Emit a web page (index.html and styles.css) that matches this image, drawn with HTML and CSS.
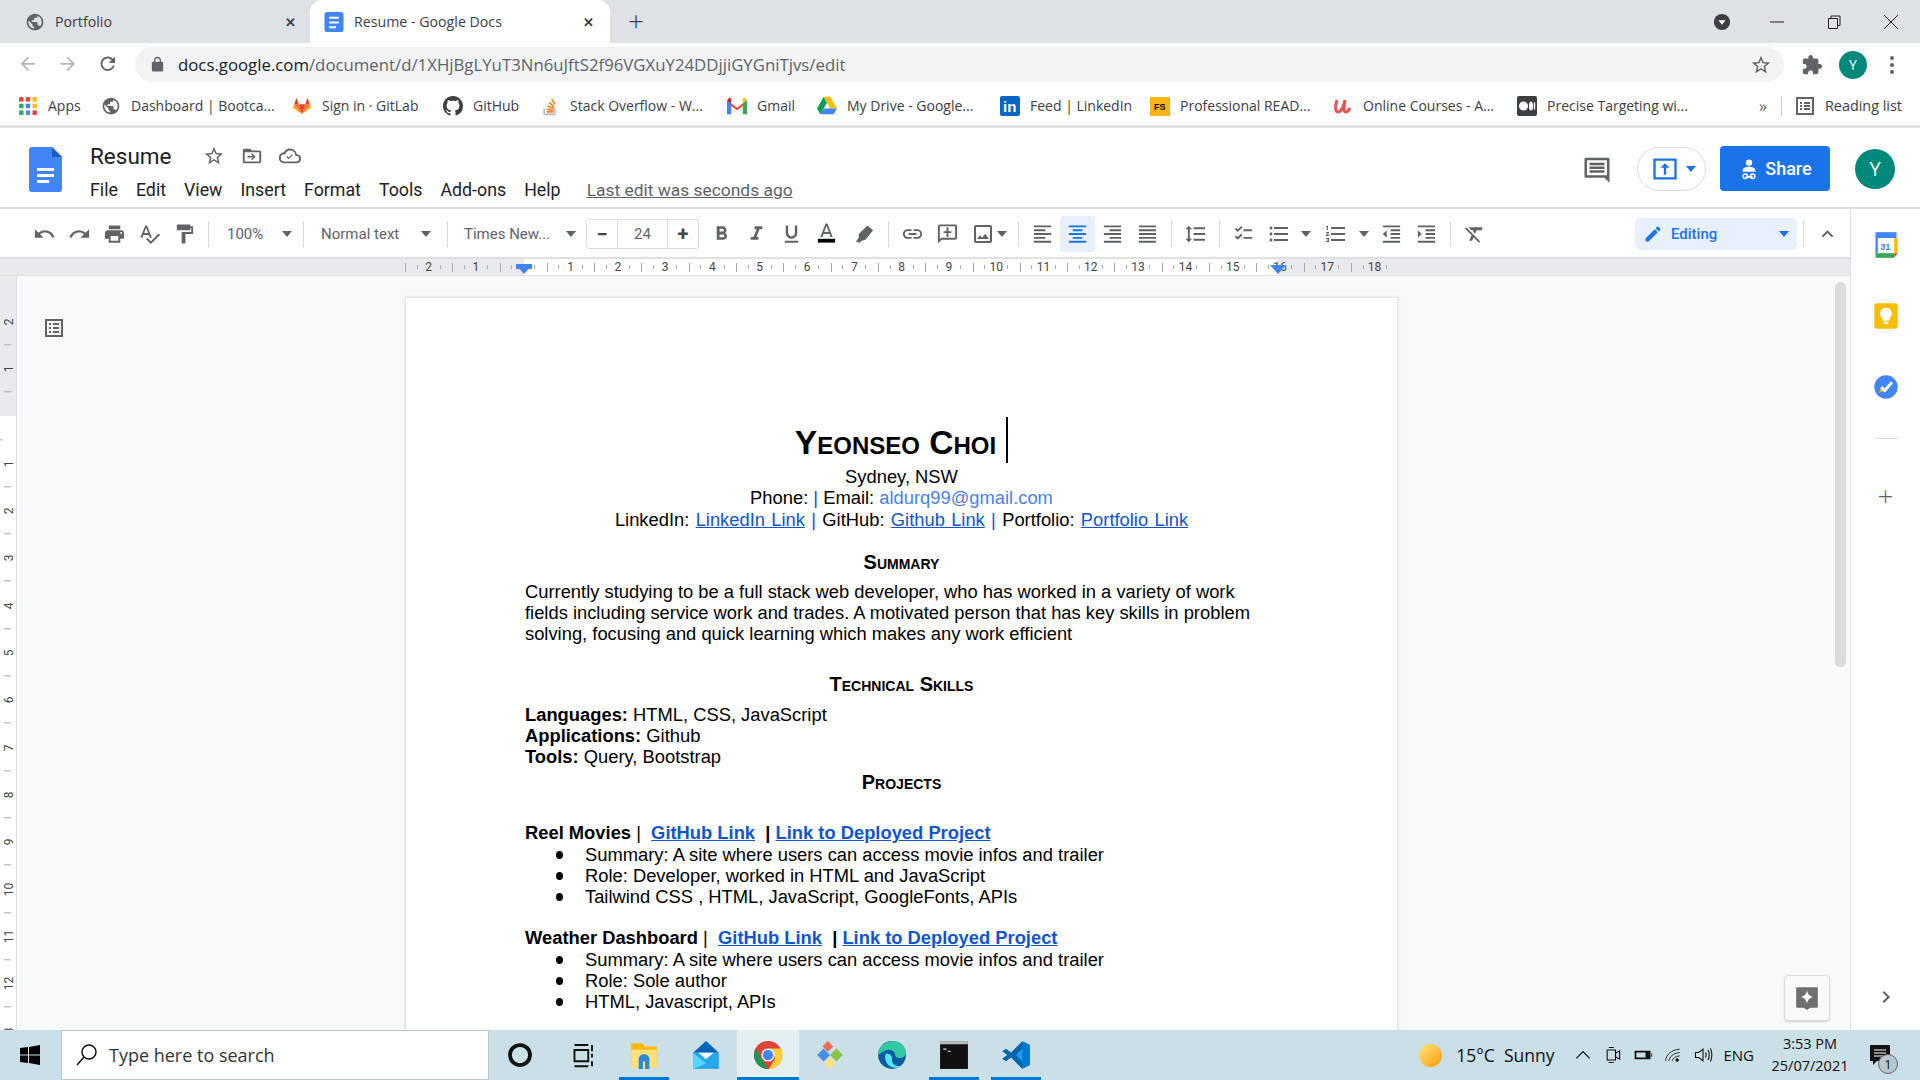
FILE: index.html
```html
<!DOCTYPE html>
<html lang="en">
<head>
    <meta charset="UTF-8">
    <title>Resume - Google Docs</title>
    <link rel="stylesheet" href="styles.css">
</head>
<body>
<svg class="defs" width="0" height="0">
    <symbol id="i-undo" viewBox="0 0 24 24"><path d="M12.5 8c-2.65 0-5.05.99-6.9 2.6L2 7v9h9l-3.62-3.62c1.39-1.16 3.16-1.88 5.12-1.88 3.54 0 6.55 2.31 7.6 5.5l2.37-.78C21.08 11.03 17.15 8 12.5 8z"/></symbol>
    <symbol id="i-redo" viewBox="0 0 24 24"><path d="M18.4 10.6C16.55 8.99 14.15 8 11.5 8c-4.65 0-8.58 3.03-9.96 7.22L3.9 16c1.05-3.19 4.05-5.5 7.6-5.5 1.95 0 3.73.72 5.12 1.88L13 16h9V7l-3.6 3.6z"/></symbol>
    <symbol id="i-print" viewBox="0 0 24 24"><path d="M19 8H5c-1.66 0-3 1.34-3 3v6h4v4h12v-4h4v-6c0-1.66-1.34-3-3-3zm-3 11H8v-5h8v5zm3-7c-.55 0-1-.45-1-1s.45-1 1-1 1 .45 1 1-.45 1-1 1zm-1-9H6v4h12V3z"/></symbol>
    <symbol id="i-spell" viewBox="0 0 24 24"><path d="M12.45 16h2.09L9.43 3H7.57L2.46 16h2.09l1.12-3h5.64l1.14 3zm-6.02-5L8.5 5.48 10.57 11H6.43zm15.16.59l-8.09 8.09L9.83 16l-1.41 1.41 5.09 5.09L23 13l-1.41-1.41z"/></symbol>
    <symbol id="i-paint" viewBox="0 0 24 24"><path d="M18 4V3c0-.55-.45-1-1-1H5c-.55 0-1 .45-1 1v4c0 .55.45 1 1 1h12c.55 0 1-.45 1-1V6h1v4H9v11c0 .55.45 1 1 1h2c.55 0 1-.45 1-1v-9h8V4h-3z"/></symbol>
    <symbol id="i-bold" viewBox="0 0 24 24"><path d="M15.6 10.79c.97-.67 1.65-1.77 1.65-2.79 0-2.26-1.75-4-4-4H7v14h7.04c2.09 0 3.71-1.7 3.71-3.79 0-1.52-.86-2.82-2.15-3.42zM10 6.5h3c.83 0 1.5.67 1.5 1.5s-.67 1.5-1.5 1.5h-3v-3zm3.5 9H10v-3h3.5c.83 0 1.5.67 1.5 1.5s-.67 1.5-1.5 1.5z"/></symbol>
    <symbol id="i-italic" viewBox="0 0 24 24"><path d="M10 4v3h2.21l-3.42 8H6v3h8v-3h-2.21l3.42-8H18V4z"/></symbol>
    <symbol id="i-under" viewBox="0 0 24 24"><path d="M12 17c3.31 0 6-2.69 6-6V3h-2.5v8c0 1.93-1.57 3.5-3.5 3.5S8.5 12.93 8.5 11V3H6v8c0 3.31 2.69 6 6 6zm-7 2v2h14v-2H5z"/></symbol>
    <symbol id="i-color" viewBox="0 0 24 24"><path d="M11 1L5.5 15h2.25l1.12-3h6.25l1.12 3h2.25L13 1h-2zm-1.38 9L12 3.67 14.38 10H9.62z"/><rect x="3" y="17" width="18" height="4" fill="#000"/></symbol>
    <symbol id="i-marker" viewBox="0 0 24 24"><path d="M15 3l6 5-8 10-4 1-2 2-4-1 3-4 0-4z"/></symbol>
    <symbol id="i-link" viewBox="0 0 24 24"><path d="M3.9 12c0-1.71 1.39-3.1 3.1-3.1h4V7H7c-2.76 0-5 2.24-5 5s2.24 5 5 5h4v-1.9H7c-1.71 0-3.1-1.39-3.1-3.1zM8 13h8v-2H8v2zm9-6h-4v1.9h4c1.71 0 3.1 1.39 3.1 3.1s-1.39 3.1-3.1 3.1h-4V17h4c2.76 0 5-2.24 5-5s-2.24-5-5-5z"/></symbol>
    <symbol id="i-addc" viewBox="0 0 24 24"><path d="M20 2H4c-1.1 0-2 .9-2 2v18l4-4h14c1.1 0 2-.9 2-2V4c0-1.1-.9-2-2-2zm0 14H5.2L4 17.2V4h16v12zM13 5h-2v4H8v2h3v4h2v-4h3V9h-3z"/></symbol>
    <symbol id="i-image" viewBox="0 0 24 24"><path d="M19 5v14H5V5h14m0-2H5c-1.1 0-2 .9-2 2v14c0 1.1.9 2 2 2h14c1.1 0 2-.9 2-2V5c0-1.1-.9-2-2-2zm-4.86 8.86l-3 3.87L9 13.14 6 17h12l-3.86-5.14z"/></symbol>
    <symbol id="i-left" viewBox="0 0 24 24"><path d="M15 15H3v2h12v-2zm0-8H3v2h12V7zM3 13h18v-2H3v2zm0 8h18v-2H3v2zM3 3v2h18V3H3z"/></symbol>
    <symbol id="i-center" viewBox="0 0 24 24"><path d="M7 15v2h10v-2H7zm-4 6h18v-2H3v2zm0-8h18v-2H3v2zm4-6v2h10V7H7zM3 3v2h18V3H3z"/></symbol>
    <symbol id="i-right" viewBox="0 0 24 24"><path d="M3 21h18v-2H3v2zm6-4h12v-2H9v2zm-6-4h18v-2H3v2zm6-4h12V7H9v2zM3 3v2h18V3H3z"/></symbol>
    <symbol id="i-just" viewBox="0 0 24 24"><path d="M3 21h18v-2H3v2zm0-4h18v-2H3v2zm0-4h18v-2H3v2zm0-4h18V7H3v2zm0-6v2h18V3H3z"/></symbol>
    <symbol id="i-space" viewBox="0 0 24 24"><path d="M6 7h2.5L5 3.5 1.5 7H4v10H1.5L5 20.5 8.5 17H6V7zm4-2v2h12V5H10zm0 14h12v-2H10v2zm0-6h12v-2H10v2z"/></symbol>
    <symbol id="i-check" viewBox="0 0 24 24"><path d="M12 7h9v2h-9zM12 15h9v2h-9zM3 7l1.4-1.4L6 7.2l3.6-3.6L11 5l-5 5zM3 15l1.4-1.4L6 15.2l3.6-3.6L11 13l-5 5z"/></symbol>
    <symbol id="i-bullet" viewBox="0 0 24 24"><path d="M4 10.5c-.83 0-1.5.67-1.5 1.5s.67 1.5 1.5 1.5 1.5-.67 1.5-1.5-.67-1.5-1.5-1.5zm0-6c-.83 0-1.5.67-1.5 1.5S3.17 7.5 4 7.5 5.5 6.83 5.5 6 4.83 4.5 4 4.5zm0 12c-.83 0-1.5.68-1.5 1.5s.68 1.5 1.5 1.5 1.5-.68 1.5-1.5-.67-1.5-1.5-1.5zM7 19h14v-2H7v2zm0-6h14v-2H7v2zm0-8v2h14V5H7z"/></symbol>
    <symbol id="i-num" viewBox="0 0 24 24"><path d="M2 17h2v.5H3v1h1v.5H2v1h3v-4H2v1zm1-9h1V4H2v1h1v3zm-1 3h1.8L2 13.1v.9h3v-1H3.2L5 10.9V10H2v1zm5-6v2h14V5H7zm0 14h14v-2H7v2zm0-6h14v-2H7v2z"/></symbol>
    <symbol id="i-dec" viewBox="0 0 24 24"><path d="M11 17h10v-2H11v2zm-8-5l4 4V8l-4 4zm0 9h18v-2H3v2zM3 3v2h18V3H3zm8 6h10V7H11v2zm0 4h10v-2H11v2z"/></symbol>
    <symbol id="i-inc" viewBox="0 0 24 24"><path d="M3 21h18v-2H3v2zM3 8v8l4-4-4-4zm8 9h10v-2H11v2zM3 3v2h18V3H3zm8 6h10V7H11v2zm0 4h10v-2H11v2z"/></symbol>
    <symbol id="i-clear" viewBox="0 0 24 24"><path d="M3.27 5L2 6.27l6.97 6.97L6.5 19h3l1.57-3.66L16.73 21 18 19.73 3.55 5.27 3.27 5zM6 5v.18L8.82 8h2.4l-.72 1.68 2.1 2.1L14.21 8H20V5H6z"/></symbol>
    <symbol id="i-pencil" viewBox="0 0 24 24"><path d="M3 17.25V21h3.75L17.81 9.94l-3.75-3.75L3 17.25zM20.71 7.04c.39-.39.39-1.02 0-1.41l-2.34-2.34c-.39-.39-1.02-.39-1.41 0l-1.83 1.83 3.75 3.75 1.83-1.83z"/></symbol>
    <symbol id="i-up" viewBox="0 0 24 24"><path d="M12 8l-6 6 1.41 1.41L12 10.83l4.59 4.58L18 14z"/></symbol>
    <symbol id="i-star" viewBox="0 0 24 24"><path d="M22 9.24l-7.19-.62L12 2 9.19 8.63 2 9.24l5.46 4.73L5.82 21 12 17.27 18.18 21l-1.63-7.03L22 9.24zM12 15.4l-3.76 2.27 1-4.28-3.32-2.88 4.38-.38L12 6.1l1.71 4.04 4.38.38-3.32 2.88 1 4.28L12 15.4z"/></symbol>
    <symbol id="i-globe" viewBox="0 0 24 24"><path d="M12 2C6.48 2 2 6.48 2 12s4.48 10 10 10 10-4.48 10-10S17.52 2 12 2zm-1 17.93c-3.95-.49-7-3.85-7-7.93 0-.62.08-1.21.21-1.79L9 15v1c0 1.1.9 2 2 2v1.93zm6.9-2.54c-.26-.81-1-1.39-1.9-1.39h-1v-3c0-.55-.45-1-1-1H8v-2h2c.55 0 1-.45 1-1V7h2c1.1 0 2-.9 2-2v-.41c2.93 1.19 5 4.06 5 7.41 0 2.08-.8 3.97-2.1 5.39z"/></symbol>
    <symbol id="i-doc" viewBox="0 0 33 45"><path fill="#4285f4" d="M3 0h20l10 10v32a3 3 0 0 1-3 3H3a3 3 0 0 1-3-3V3a3 3 0 0 1 3-3z"/><path fill="#1a5fc9" d="M23 0l10 10H23z"/><path fill="#fff" d="M8 21h17v3H8zM8 27h17v3H8zM8 33h12v3H8z"/></symbol>
</svg>

<header class="tabstrip">
    <div class="tab">
        <svg class="ico16 globe"><use href="#i-globe"/></svg>
        <span class="tab-title">Portfolio</span>
        <span class="tab-x">&#x2715;</span>
    </div>
    <div class="tab tab-on">
        <svg class="ico16" viewBox="0 0 20 21"><rect width="20" height="21" rx="3" fill="#4285f4"/><path fill="#fff" d="M5 5h10v2H5zM5 10h10v2H5zM5 15h7v2H5z"/></svg>
        <span class="tab-title">Resume - Google Docs</span>
        <span class="tab-x">&#x2715;</span>
    </div>
    <div class="tab-new">+</div>
    <div class="win-btns">
        <svg class="win-profile" viewBox="0 0 20 20"><circle cx="10" cy="10" r="9" fill="#3c4043"/><path d="M6 8h8l-4 5z" fill="#fff"/></svg>
        <svg class="win-btn" viewBox="0 0 14 14"><path d="M0 7h14" stroke="#222" fill="none"/></svg>
        <svg class="win-btn" viewBox="0 0 14 14"><path d="M1.5 3.5h9v10h-9zM4 3.5V1h9v9.5h-2.5" stroke="#222" fill="none"/></svg>
        <svg class="win-btn" viewBox="0 0 14 14"><path d="M0 0l14 14M14 0L0 14" stroke="#222" fill="none"/></svg>
    </div>
</header>

<nav class="addressbar">
    <svg class="nav-ico dim"><path d="M20 11H7.83l5.59-5.59L12 4l-8 8 8 8 1.41-1.41L7.83 13H20v-2z" transform="scale(.9)"/></svg>
    <svg class="nav-ico dim"><path d="M12 4l-1.41 1.41L16.17 11H4v2h12.17l-5.58 5.59L12 20l8-8z" transform="scale(.9)"/></svg>
    <svg class="nav-ico"><path d="M17.65 6.35C16.2 4.9 14.21 4 12 4c-4.42 0-7.99 3.58-7.99 8s3.57 8 7.99 8c3.73 0 6.84-2.55 7.73-6h-2.08c-.82 2.33-3.04 4-5.65 4-3.31 0-6-2.69-6-6s2.69-6 6-6c1.66 0 3.14.69 4.22 1.78L13 11h7V4l-2.35 2.35z" transform="scale(.9)"/></svg>
    <div class="omnibox">
        <svg class="lock" viewBox="0 0 24 24"><path d="M18 8h-1V6c0-2.76-2.24-5-5-5S7 3.24 7 6v2H6c-1.1 0-2 .9-2 2v10c0 1.1.9 2 2 2h12c1.1 0 2-.9 2-2V10c0-1.1-.9-2-2-2zM9 6c0-1.66 1.34-3 3-3s3 1.34 3 3v2H9V6z"/></svg>
        <span class="url"><b>docs.google.com</b>/document/d/1XHjBgLYuT3Nn6uJftS2f96VGXuY24DDjjiGYGniTjvs/edit</span>
        <svg class="omni-star" viewBox="0 0 24 24"><use href="#i-star"/></svg>
    </div>
    <svg class="nav-ext" viewBox="0 0 24 24"><path d="M20.5 11H19V7c0-1.1-.9-2-2-2h-4V3.5C13 2.12 11.88 1 10.5 1S8 2.12 8 3.5V5H4c-1.1 0-1.99.9-1.99 2v3.8H3.5c1.49 0 2.7 1.21 2.7 2.7s-1.21 2.7-2.7 2.7H2V20c0 1.1.9 2 2 2h3.8v-1.5c0-1.49 1.21-2.7 2.7-2.7 1.49 0 2.7 1.21 2.7 2.7V22H17c1.1 0 2-.9 2-2v-4h1.5c1.38 0 2.5-1.12 2.5-2.5S21.88 11 20.5 11z"/></svg>
    <span class="nav-avatar">Y</span>
    <span class="kebab"><i></i><i></i><i></i></span>
</nav>

<nav class="bookmarks">
    <a class="bm bm-apps"><svg viewBox="0 0 18 18"><rect x="1" y="1" width="4" height="4" fill="#ea4335"/><rect x="7" y="1" width="4" height="4" fill="#ea4335"/><rect x="13" y="1" width="4" height="4" fill="#fbbc04"/><rect x="1" y="7" width="4" height="4" fill="#34a853"/><rect x="7" y="7" width="4" height="4" fill="#4285f4"/><rect x="13" y="7" width="4" height="4" fill="#fbbc04"/><rect x="1" y="13" width="4" height="4" fill="#34a853"/><rect x="7" y="13" width="4" height="4" fill="#4285f4"/><rect x="13" y="13" width="4" height="4" fill="#ea4335"/></svg>Apps</a>
    <a class="bm bm-dash"><svg class="globe" viewBox="0 0 24 24"><use href="#i-globe"/></svg>Dashboard | Bootca...</a>
    <a class="bm bm-lab"><svg viewBox="0 0 24 24"><path fill="#e24329" d="M12 22l4-12H8z"/><path fill="#fc6d26" d="M12 22L8 10H2.5zM12 22l4-12h5.5z"/><path fill="#fca326" d="M2.5 10l-1.3 4 10.8 8zM21.5 10l1.3 4-10.8 8z"/><path fill="#e24329" d="M2.5 10H8L5.5 2zM21.5 10H16l2.5-8z"/></svg>Sign in · GitLab</a>
    <a class="bm bm-hub"><svg viewBox="0 0 16 16"><path d="M8 0C3.58 0 0 3.58 0 8c0 3.54 2.29 6.53 5.47 7.59.4.07.55-.17.55-.38 0-.19-.01-.82-.01-1.49-2.01.37-2.53-.49-2.69-.94-.09-.23-.48-.94-.82-1.13-.28-.15-.68-.52-.01-.53.63-.01 1.08.58 1.23.82.72 1.21 1.87.87 2.33.66.07-.52.28-.87.51-1.07-1.78-.2-3.64-.89-3.64-3.95 0-.87.31-1.59.82-2.15-.08-.2-.36-1.02.08-2.12 0 0 .67-.21 2.2.82.64-.18 1.32-.27 2-.27.68 0 1.36.09 2 .27 1.53-1.04 2.2-.82 2.2-.82.44 1.1.16 1.92.08 2.12.51.56.82 1.27.82 2.15 0 3.07-1.87 3.75-3.65 3.95.29.25.54.73.54 1.48 0 1.07-.01 1.93-.01 2.2 0 .21.15.46.55.38A8.013 8.013 0 0016 8c0-4.42-3.58-8-8-8z"/></svg>GitHub</a>
    <a class="bm bm-so"><svg viewBox="0 0 24 24"><path fill="none" stroke="#bcbbbb" stroke-width="2" d="M5 15v7h13v-7"/><path fill="none" stroke="#f48024" stroke-width="2" d="M8 19h8M8 16l8 1M9 12l7.5 3M11 8l6 5M14 4l4 6"/></svg>Stack Overflow - W...</a>
    <a class="bm bm-gmail"><svg viewBox="0 0 24 20"><path fill="#ea4335" d="M0 3l12 9 12-9v3l-12 9L0 6z"/><path fill="#4285f4" d="M0 3v17h5V7z"/><path fill="#34a853" d="M24 3v17h-5V7z"/><path fill="#c5221f" d="M0 3l3-3 2 1v6z"/><path fill="#fbbc04" d="M24 3l-3-3-2 1v6z"/></svg>Gmail</a>
    <a class="bm bm-drive"><svg viewBox="0 0 24 22"><path fill="#0f9d58" d="M8 0L0 14l4 7 8-14z"/><path fill="#fbbc04" d="M8 0h8l8 14h-8z"/><path fill="#4285f4" d="M8 14h16l-4 7H4z"/></svg>My Drive - Google...</a>
    <a class="bm bm-in"><svg viewBox="0 0 20 20"><rect width="20" height="20" rx="2" fill="#0a66c2"/><text x="3" y="16" class="svg-in">in</text></svg>Feed | LinkedIn</a>
    <a class="bm bm-fs"><svg viewBox="0 0 20 20"><rect y="1" width="20" height="19" fill="#fdb515"/><text x="4" y="14" class="svg-fs">FS</text></svg>Professional READ...</a>
    <a class="bm bm-ud"><svg viewBox="0 0 20 20"><path d="M4 4c-2 6-2 12 1 12s6-6 7-12c-1 6-2 12 1 12 1 0 3-2 4-4" fill="none" stroke="#ec5252" stroke-width="3"/></svg>Online Courses - A...</a>
    <a class="bm bm-med"><svg viewBox="0 0 20 20"><rect width="20" height="20" rx="2"/><circle cx="6.5" cy="10" r="4.5" fill="#fff"/><ellipse cx="14" cy="10" rx="2" ry="4.5" fill="#fff"/><ellipse cx="17.5" cy="10" rx=".8" ry="4" fill="#fff"/></svg>Precise Targeting wi...</a>
    <span class="bm-more">&raquo;</span>
    <a class="bm bm-read"><svg viewBox="0 0 20 20"><path d="M2 2h16v16H2z" fill="none" stroke="#5f6368" stroke-width="2"/><path d="M5 6h2v2H5zM9 6h6v2H9zM5 9h2v2H5zM9 9h6v2H9zM5 12h2v2H5zM9 12h6v2H9z" fill="#5f6368"/></svg>Reading list</a>
</nav>

<section class="docs-head">
    <svg class="doc-logo"><use href="#i-doc"/></svg>
    <div class="doc-info">
        <div class="doc-title">
            <span>Resume</span>
            <svg class="head-ico star"><use href="#i-star"/></svg>
            <svg class="head-ico" viewBox="0 0 24 24"><path d="M20 6h-8l-2-2H4c-1.1 0-2 .9-2 2v12c0 1.1.9 2 2 2h16c1.1 0 2-.9 2-2V8c0-1.1-.9-2-2-2zm0 12H4V8h16v10zM12 9l-1 1 2 2H7v1.5h6l-2 2 1 1 4-4z"/></svg>
            <svg class="head-ico" viewBox="0 0 24 24"><path d="M19.4 10A7.5 7.5 0 0 0 5.4 8 6 6 0 0 0 6 20h13a5 5 0 0 0 .4-10zM19 18H6a4 4 0 0 1-.2-8H7a5.5 5.5 0 0 1 10.8 1.2l.2.8h1a3 3 0 0 1 0 6zm-8.5-2.5L8 13l1-1 1.5 1.5 3.5-3.5 1 1z"/></svg>
        </div>
        <div class="menus">
            <span>File</span><span>Edit</span><span>View</span><span>Insert</span><span>Format</span><span>Tools</span><span>Add-ons</span><span>Help</span>
            <a class="last-edit">Last edit was seconds ago</a>
        </div>
    </div>
    <div class="head-right">
        <svg class="head-comment" viewBox="0 0 24 24"><path d="M21 3H3c-.6 0-1 .4-1 1v14c0 .6.4 1 1 1h15l4 4V4c0-.6-.4-1-1-1zm-1 14H4V5h16zM6 7h12v2H6zM6 10h12v2H6zM6 13h12v2H6z"/></svg>
        <div class="present">
            <svg viewBox="0 0 24 24"><path fill="#1a73e8" d="M2 3h20v18H2zm2 2v14h16V5z"/><path fill="#1a73e8" d="M12 7l4 4h-3v6h-2v-6H8z"/></svg>
            <span class="caret blue"></span>
        </div>
        <div class="share">
            <svg viewBox="0 0 24 24"><circle cx="12" cy="5" r="3.5" fill="#fff"/><path fill="#fff" d="M5 14c0-3 3-4.5 7-4.5s7 1.5 7 4.5v1H5z"/><path d="M8 20.5h8" stroke="#fff" stroke-width="2"/><circle cx="8" cy="20" r="2.5" fill="none" stroke="#fff" stroke-width="1.5"/><circle cx="16" cy="20" r="2.5" fill="none" stroke="#fff" stroke-width="1.5"/></svg>
            <span>Share</span>
        </div>
        <span class="doc-avatar">Y</span>
    </div>
</section>

<main class="docs-body">
    <div class="docs-left">
        <div class="toolbar">
            <svg class="tool"><use href="#i-undo"/></svg>
            <svg class="tool"><use href="#i-redo"/></svg>
            <svg class="tool"><use href="#i-print"/></svg>
            <svg class="tool"><use href="#i-spell"/></svg>
            <svg class="tool"><use href="#i-paint"/></svg>
            <i class="sep"></i>
            <div class="drop drop-zoom"><span>100%</span><span class="caret"></span></div>
            <i class="sep"></i>
            <div class="drop drop-style"><span>Normal text</span><span class="caret"></span></div>
            <i class="sep"></i>
            <div class="drop drop-font"><span>Times New...</span><span class="caret"></span></div>
            <div class="size"><b>&minus;</b><span>24</span><b>+</b></div>
            <svg class="tool"><use href="#i-bold"/></svg>
            <svg class="tool"><use href="#i-italic"/></svg>
            <svg class="tool"><use href="#i-under"/></svg>
            <svg class="tool"><use href="#i-color"/></svg>
            <svg class="tool tool-marker"><use href="#i-marker"/></svg>
            <i class="sep"></i>
            <svg class="tool"><use href="#i-link"/></svg>
            <svg class="tool"><use href="#i-addc"/></svg>
            <svg class="tool tool-s"><use href="#i-image"/></svg>
            <span class="caret caret-img"></span>
            <i class="sep sep-tight"></i>
            <svg class="tool"><use href="#i-left"/></svg>
            <svg class="tool tool-on"><use href="#i-center"/></svg>
            <svg class="tool"><use href="#i-right"/></svg>
            <svg class="tool"><use href="#i-just"/></svg>
            <i class="sep"></i>
            <svg class="tool"><use href="#i-space"/></svg>
            <i class="sep"></i>
            <svg class="tool"><use href="#i-check"/></svg>
            <svg class="tool tool-s"><use href="#i-bullet"/></svg>
            <span class="caret caret-bul"></span>
            <svg class="tool tool-s"><use href="#i-num"/></svg>
            <span class="caret caret-num"></span>
            <svg class="tool"><use href="#i-dec"/></svg>
            <svg class="tool"><use href="#i-inc"/></svg>
            <i class="sep"></i>
            <svg class="tool"><use href="#i-clear"/></svg>
            <div class="editing">
                <svg viewBox="0 0 24 24"><use href="#i-pencil"/></svg>
                <span>Editing</span>
                <span class="caret blue"></span>
            </div>
            <i class="sep"></i>
            <svg class="tool"><use href="#i-up"/></svg>
        </div>

        <div class="ruler">
            <div class="ruler-track">
                <span>2</span><span>1</span><span></span><span>1</span><span>2</span><span>3</span><span>4</span><span>5</span><span>6</span><span>7</span><span>8</span><span>9</span><span>10</span><span>11</span><span>12</span><span>13</span><span>14</span><span>15</span><span>16</span><span>17</span><span>18</span>
                <i class="mark mark-left"></i>
                <i class="mark mark-right"></i>
            </div>
        </div>

        <div class="work">
            <div class="vruler">
                <span>2</span><span>1</span><span></span><span>1</span><span>2</span><span>3</span><span>4</span><span>5</span><span>6</span><span>7</span><span>8</span><span>9</span><span>10</span><span>11</span><span>12</span><span>3</span>
            </div>
            <div class="canvas">
                <svg class="outline-ico" viewBox="0 0 24 24"><path d="M3 3h18v18H3zm2 2v14h14V5zM7 7h2v2H7zM11 7h6v2h-6zM7 11h2v2H7zM11 11h6v2h-6zM7 15h2v2H7zM11 15h6v2h-6z"/></svg>
                <article class="page">
                    <h1 class="name">Yeonseo Choi <i class="cursor"></i></h1>
                    <p class="center gap5">Sydney, NSW</p>
                    <p class="center">Phone: <span class="pipe">|</span> Email: <a class="mail">aldurq99@gmail.com</a></p>
                    <p class="center gap1 wide">LinkedIn: <a>LinkedIn Link</a> <span class="pipe">|</span> GitHub: <a>Github Link</a> <span class="pipe">|</span> Portfolio: <a>Portfolio Link</a></p>

                    <h2 class="sec gap22">Summary</h2>
                    <p class="gap8">Currently studying to be a full stack web developer, who has worked in a variety of work<br>fields including service work and trades. A motivated person that has key skills in problem<br>solving, focusing and quick learning which makes any work efficient</p>

                    <h2 class="sec gap30">Technical Skills</h2>
                    <p class="gap9"><b>Languages:</b> HTML, CSS, JavaScript</p>
                    <p><b>Applications:</b> Github</p>
                    <p><b>Tools:</b> Query, Bootstrap</p>

                    <h2 class="sec gap5">Projects</h2>
                    <p class="proj gap29"><b>Reel Movies</b> |&nbsp; <a><b>GitHub Link</b></a> &nbsp;<b>|</b> <a><b>Link to Deployed Project</b></a></p>
                    <ul class="gap1">
                        <li>Summary: A site where users can access movie infos and trailer</li>
                        <li>Role: Developer, worked in HTML and JavaScript</li>
                        <li>Tailwind CSS , HTML, JavaScript, GoogleFonts, APIs</li>
                    </ul>
                    <p class="proj gap20"><b>Weather Dashboard</b> |&nbsp; <a><b>GitHub Link</b></a> &nbsp;<b>|</b> <a><b>Link to Deployed Project</b></a></p>
                    <ul class="gap1">
                        <li>Summary: A site where users can access movie infos and trailer</li>
                        <li>Role: Sole author</li>
                        <li>HTML, Javascript, APIs</li>
                    </ul>
                </article>
                <div class="scroll-thumb"></div>
                <div class="explore"><svg viewBox="0 0 24 24"><path fill="#6f6f6f" d="M3 2h18a1 1 0 0 1 1 1v17a1 1 0 0 1-1 1h-6l-3 2-3-2H3a1 1 0 0 1-1-1V3a1 1 0 0 1 1-1z"/><path fill="#fff" d="M12 5c.8 3.6 2.4 5.2 6 6-3.6.8-5.2 2.4-6 6-.8-3.6-2.4-5.2-6-6 3.6-.8 5.2-2.4 6-6z"/></svg></div>
            </div>
        </div>
    </div>

    <aside class="side">
        <svg class="side-ico" viewBox="0 0 24 24"><path fill="#4285f4" d="M3 1h18v5H3z"/><path fill="#fff" d="M3 6h18v13H3z"/><path fill="#4285f4" d="M3 6h2v13H3z"/><path fill="#fbbc04" d="M19 6h3v13h-3z"/><path fill="#34a853" d="M3 19h16v4H3z"/><path fill="#ea4335" d="M19 19h3l-3 4z"/><text x="7" y="16" class="svg-cal">31</text></svg>
        <svg class="side-ico" viewBox="0 0 24 24"><rect x="2" y="1" width="20" height="22" rx="2" fill="#fbbc04"/><path fill="#fff" d="M12 5a5 5 0 0 0-3 9v2h6v-2a5 5 0 0 0-3-9zM10 17h4v2h-4z"/></svg>
        <svg class="side-ico" viewBox="0 0 24 24"><circle cx="12" cy="12" r="10" fill="#4285f4"/><path fill="#fbbc04" d="M6 17l2-5 3 3z"/><path fill="none" stroke="#fff" stroke-width="2.5" d="M8 12l3 3 6-7"/></svg>
        <i class="side-sep"></i>
        <span class="side-plus">+</span>
        <svg class="side-next" viewBox="0 0 24 24"><path d="M10 6L8.59 7.41 13.17 12l-4.58 4.59L10 18l6-6z"/></svg>
    </aside>
</main>

<footer class="taskbar">
    <svg class="start" viewBox="0 0 20 20"><path d="M0 3l8-1v7.5H0zM9 2l11-2v9.5H9zM0 10.5h8V18l-8-1zM9 10.5h11V20L9 18z"/></svg>
    <div class="search">
        <svg viewBox="0 0 24 24"><circle cx="14" cy="9" r="7" fill="none" stroke="#111" stroke-width="1.5"/><path d="M9 14l-7 8" stroke="#111" stroke-width="1.5"/></svg>
        <span>Type here to search</span>
    </div>
    <div class="task"><svg viewBox="0 0 24 24"><circle cx="12" cy="12" r="8" fill="none" stroke="#111" stroke-width="3"/></svg></div>
    <div class="task"><svg viewBox="0 0 24 24"><path d="M6 8h11v9H6zM6 4h11M6 21h11M20 4v5M20 11v3M20 17v4" fill="none" stroke="#111" stroke-width="1.5"/></svg></div>
    <div class="task run"><svg viewBox="0 0 28 28"><path fill="#ffb900" d="M2 3h10l3 3h11v20H2z"/><path fill="#ffe07a" d="M2 9h24v17H2z"/><path fill="#2b88d8" d="M9 27v-9a5 5 0 0 1 10 0v9h-4v-7h-2v7z"/></svg></div>
    <div class="task"><svg viewBox="0 0 28 28"><path fill="#0364b8" d="M14 1l12 11H2z"/><path fill="#28a8ea" d="M2 12h24v15H2z"/><path fill="#50d9ff" d="M2 12l12 10-12 5z"/><path fill="#fff" d="M7 12h14l-7 6z"/></svg></div>
    <div class="task run run-on"><svg viewBox="0 0 32 32"><circle cx="16" cy="16" r="15" fill="#db4437"/><path fill="#0f9d58" d="M3 9l8 15 5 7A15 15 0 0 1 3 9z"/><path fill="#ffcd40" d="M16 9h14a15 15 0 0 1-13 22l7-12z"/><circle cx="16" cy="16" r="7" fill="#fff"/><circle cx="16" cy="16" r="5.5" fill="#4285f4"/></svg></div>
    <div class="task"><svg viewBox="0 0 28 28"><path fill="#ef6a5a" d="M14 0l5 5-5 5-5-5z" transform="translate(-2 1)"/><path fill="#4a90e2" d="M8 8l6 6-6 6-6-6z"/><path fill="#8bc34a" d="M20 8l6 6-6 6-6-6z"/><path fill="#ffe27a" d="M14 16l5 5-5 6-5-6z"/></svg></div>
    <div class="task"><svg viewBox="0 0 28 28"><circle cx="14" cy="14" r="13" fill="#0c59a4"/><path fill="#30c9a0" d="M1 14C1 6 8 1 15 1c7 0 12 5 12 11 0 3-3 5-6 5-3 0-4-2-4-3 0-3-3-5-6-5s-6 2-10 5z"/><path fill="#50e6ff" d="M8 13c-2 6 3 13 9 13 2 0 4-1 6-2-6 1-10-2-9-8-1-3-5-4-6-3z"/></svg></div>
    <div class="task run"><svg viewBox="0 0 28 28"><rect x="1" y="1" width="26" height="26" fill="#111"/><rect x="1" y="1" width="26" height="3" fill="#bbb"/><path d="M4 8h3v1H4zM8 10h3v1H8z" fill="#ddd"/></svg></div>
    <div class="task run"><svg viewBox="0 0 24 24"><path fill="#0065a9" d="M17 1l6 3v16l-6 3-9-9-4 3-3-2 4-3-4-3 3-2 4 3z"/><path fill="#007acc" d="M17 1l6 3v16l-6 3z"/><path fill="#1f9cf0" d="M17 7l-5 5 5 5z"/></svg></div>

    <div class="tray">
        <i class="sun"></i>
        <span class="weather">15°C&nbsp;&nbsp;Sunny</span>
        <svg class="tray-ico" viewBox="0 0 24 24"><path d="M4 16l8-8 8 8" fill="none" stroke="#111" stroke-width="1.5"/></svg>
        <svg class="tray-ico" viewBox="0 0 24 24"><path d="M5 6h10v12H5zM15 10l5-3v10l-5-3M7 3h6M7 21h6" fill="none" stroke="#111" stroke-width="1.3"/></svg>
        <svg class="tray-ico" viewBox="0 0 24 24"><path d="M2 7h19v10H2zM4 9h11v6H4zM22 10h1v4h-1z" fill="#111" fill-rule="evenodd"/></svg>
        <svg class="tray-ico" viewBox="0 0 24 24"><path d="M3 19c1-8 7-13 17-14M7 19c1-5 5-9 13-10M11 19c1-3 3-5 9-6" fill="none" stroke="#111"/><circle cx="17" cy="18" r="2" fill="#111"/></svg>
        <svg class="tray-ico" viewBox="0 0 24 24"><path d="M3 9h4l5-4v14l-5-4H3zM15 9c1 2 1 4 0 6M18 6c2 4 2 8 0 12M21 4c2 5 2 11 0 16" fill="none" stroke="#111" stroke-width="1.3"/></svg>
        <span class="lang">ENG</span>
        <div class="clock"><span>3:53 PM</span><span>25/07/2021</span></div>
        <div class="notify">
            <svg viewBox="0 0 24 24"><path d="M2 2h20v16H9l-4 4v-4H2z"/><path d="M6 7h12M6 10h12M6 13h9" stroke="#fff"/></svg>
            <span class="notify-n">1</span>
        </div>
    </div>
</footer>
</body>
</html>
```

FILE: styles.css
```css
*{ padding: 0; margin: 0; box-sizing: border-box;}
html,body{ width: 1920px; height: 1080px; overflow: hidden;}
body{ display: flex; flex-direction: column; background: #fff; font-family: "Open Sans", sans-serif; color: #3c4043;}
.defs{ position: absolute;}
a{ color: inherit;}
svg{ fill: currentColor; flex: none;}
i{ font-style: normal;}

/* browser tabs */
.tabstrip{ height: 43px; background: #dee1e6; display: flex; align-items: stretch; padding-left: 8px;}
.tab{ width: 300px; display: flex; align-items: center; padding: 0 12px 0 17px; margin-right: 2px; font-size: 14.2px; gap: 10px;}
.tab-on{ background: #fff; border-radius: 12px 12px 0 0; padding: 0 16px 0 14px;}
.tab-title{ flex: 1; white-space: nowrap;}
.tab-x{ font-size: 13px; font-weight: 700; color: #3c4043;}
.ico16{ width: 20px; height: 20px;}
.globe{ color: #5f6368;}
.tab-new{ font-size: 28px; font-weight: 300; line-height: 40px; margin-left: 16px; color: #3c4043;}
.win-btns{ margin-left: auto; display: flex; align-items: center;}
.win-profile{ width: 18px; height: 18px; margin-right: 39px;}
.win-btn{ width: 14px; height: 14px; margin-right: 43px;}
.win-btn:last-child{ margin-right: 22px;}

/* address row */
.addressbar{ height: 43px; display: flex; align-items: center; padding-left: 17px; color: #5f6368;}
.nav-ico{ width: 24px; height: 24px; margin-right: 16px;}
.nav-ico.dim{ color: #b5b7ba;}
.omnibox{ flex: none; width: 1649px; height: 35px; margin-left: -2px; background: #f1f3f4; border-radius: 18px; display: flex; align-items: center; padding: 0 12px 0 14px;}
.lock{ width: 17px; height: 17px; margin-right: 12px;}
.url{ font-size: 16.8px; color: #5f6368; white-space: nowrap;}
.url b{ font-weight: 400; color: #202124;}
.omni-star{ width: 22px; height: 22px; margin-left: auto;}
.nav-ext{ width: 22px; height: 22px; margin-left: 17px;}
.nav-avatar{ width: 28px; height: 28px; margin-left: 16px; border-radius: 50%; background: #00897b; color: #fff; font-size: 14px; line-height: 28px; text-align: center;}
.kebab{ display: flex; flex-direction: column; gap: 3px; margin-left: 23px;}
.kebab i{ width: 4px; height: 4px; border-radius: 50%; background: #5f6368;}

/* bookmarks */
.bookmarks{ height: 42px; display: flex; align-items: center; padding-left: 18px; border-bottom: 3px solid #e0e0e0;}
.bm{ display: flex; align-items: center; gap: 10px; font-size: 14px; white-space: nowrap; flex: none;}
.bm svg{ width: 20px; height: 20px;}
.bm-apps{ width: 83px;}
.bm-dash{ width: 191px;}
.bm-lab{ width: 151px;}
.bm-hub{ width: 97px;}
.bm-so{ width: 187px;}
.bm-gmail{ width: 90px;}
.bm-drive{ width: 183px;}
.bm-in{ width: 150px;}
.bm-fs{ width: 183px;}
.bm-ud{ width: 184px;}
.svg-in{ font: 700 15px "Liberation Sans", sans-serif; fill: #fff;}
.svg-fs{ font: 700 9px "Liberation Sans", sans-serif; fill: #000;}
.bm-more{ margin-left: auto; font-size: 16px; color: #5f6368;}
.bm-read{ margin-left: 14px; padding-left: 13px; margin-right: 18px; border-left: 1px solid #c4c7c5; font-size: 14.4px;}

/* docs header */
.docs-head{ height: 81px; display: flex; padding-left: 29px; border-bottom: 2px solid #e0e0e0; position: relative;}
.doc-logo{ width: 33px; height: 45px; margin-top: 19px;}
.doc-info{ margin-left: 28px;}
.doc-title{ display: flex; align-items: center; height: 32px; margin-top: 12px; font-family: Roboto, sans-serif; font-size: 22.5px; color: #202124;}
.doc-title span{ width: 81px; margin-right: 32px;}
.head-ico{ width: 22px; height: 22px; margin-right: 16px; color: #5f6368;}
.menus{ display: flex; align-items: center; gap: 18px; margin-top: 7px; font-family: Roboto, sans-serif; font-size: 17.8px; color: #202124;}
.last-edit{ margin-left: 8px; color: #5f6368; text-decoration: underline; font-size: 17.4px;}
.head-right{ margin-left: auto; display: flex; align-items: center; height: 100%; padding: 2px 25px 0 0;}
.head-comment{ width: 30px; height: 30px; color: #5f6368; margin-right: 25px;}
.present{ width: 69px; height: 44px; border: 1px solid #dadce0; border-radius: 22px; display: flex; align-items: center; padding-left: 13px; gap: 2px; margin-right: 14px;}
.present svg{ width: 28px; height: 28px;}
.share{ width: 110px; height: 45px; border-radius: 4px; background: #1a73e8; color: #fff; display: flex; align-items: center; justify-content: center; gap: 5px; font: 500 18px Roboto, sans-serif;}
.share svg{ width: 22px; height: 28px;}
.doc-avatar{ width: 40px; height: 40px; margin-left: 25px; border-radius: 50%; background: #00897b; color: #fff; font-size: 20px; line-height: 40px; text-align: center;}

/* docs body */
.docs-body{ flex: 1; display: flex; min-height: 0;}
.docs-left{ flex: 1; min-width: 0; display: flex; flex-direction: column;}
.side{ width: 70px; border-left: 1px solid #e0e0e0; display: flex; flex-direction: column; align-items: center; padding-top: 22px;}
.side-ico{ width: 28px; height: 28px; margin-bottom: 43px;}
.svg-cal{ font: 700 8px "Liberation Sans", sans-serif; fill: #4285f4;}
.side-sep{ width: 24px; height: 1px; background: #dadce0; margin-top: -6px;}
.side-plus{ font-size: 28px; font-weight: 300; color: #5f6368; line-height: 30px; margin-top: 41px;}
.side-next{ width: 24px; height: 24px; color: #5f6368; margin-top: auto; margin-bottom: 21px;}

/* toolbar */
.toolbar{ height: 50px; display: flex; align-items: center; padding: 2px 0 0 27px; border-bottom: 2px solid #e0e0e0; color: #5f6368;}
.tool{ width: 35px; height: 36px; padding: 6px; flex: none;}
.tool-s{ width: 24px; padding: 6px 0; margin-left: 6px;}
.tool-on{ background: #e8f0fe; color: #1a73e8; border-radius: 4px;}
.tool-marker{ margin-left: 3px;}
.sep{ width: 1px; height: 26px; background: #dadce0; margin: 0 6px; flex: none;}
.sep-tight{ margin-left: 11px;}
.caret{ width: 0; height: 0; border: 5px solid transparent; border-top: 6px solid #5f6368; border-bottom: 0; flex: none; margin: 0 5px;}
.caret.blue{ border-top-color: #1a73e8;}
.caret-img{ margin: 0 0 0 2px;}
.caret-bul{ margin: 0 7px 0 10px;}
.caret-num{ margin: 0 5px 0 11px;}
.drop{ display: flex; align-items: center; justify-content: space-between; font: 15px Roboto, sans-serif; padding: 0 5px 0 0; height: 36px;}
.drop span:first-child{ white-space: nowrap;}
.drop-zoom{ width: 82px; padding: 0 0 0 12px;}
.drop-style{ width: 131px; padding-left: 11px;}
.drop-font{ width: 132px; padding-left: 10px;}
.size{ width: 113px; height: 30px; border: 1px solid #dadce0; border-radius: 3px; display: flex; margin-right: 5px; font: 15px Roboto, sans-serif; text-align: center; line-height: 28px;}
.size b{ width: 30px; font-size: 20px; color: #444;}
.size span{ flex: 1; border: solid #dadce0; border-width: 0 1px;}
.editing{ margin-left: 143px; width: 162px; height: 32px; background: #e8f0fe; border-radius: 6px; color: #1a73e8; font: 500 15px Roboto, sans-serif; display: flex; align-items: center; padding-left: 8px; gap: 8px;}
.editing svg{ width: 20px; height: 20px;}
.editing .caret{ margin-left: auto; margin-right: 8px;}

/* ruler */
.ruler{ height: 17px; background: #e8eaed; padding-left: 405px; border-bottom: 1px solid #e0e0e0; flex: none;}
.ruler-track{ width: 993px; height: 16px; display: flex; position: relative;
    background: linear-gradient(to right, transparent 119px, #fff 119px, #fff 872px, transparent 872px);}
.ruler-track span{ width: 47.3px; flex: none; text-align: center; font: 12px/16px Roboto, sans-serif; color: #444;
    background: linear-gradient(#aaa,#aaa) 0 center/1px 9px no-repeat,
                linear-gradient(#aaa,#aaa) 25% center/1px 4px no-repeat,
                linear-gradient(#aaa,#aaa) 75% center/1px 4px no-repeat;}
.mark{ position: absolute; width: 0; height: 0; border: 8px solid transparent; border-top: 9px solid #4285f4; border-bottom: 0; top: 6px;}
.mark-left{ left: 111px;}
.mark-left::before{ content: ""; position: absolute; left: -8px; top: -10px; width: 16px; height: 5px; background: #4285f4;}
.mark-right{ left: 865px;}

/* document */
.work{ flex: 1; min-height: 0; display: flex;}
.vruler{ width: 17px; flex: none; padding-top: 22px; border-right: 1px solid #e0e0e0; overflow: hidden;
    background: linear-gradient(#e8eaed 140px, #fff 140px);}
.vruler span{ display: flex; align-items: center; justify-content: center; height: 47.3px; padding-right: 3px; font: 12px/12px Roboto, sans-serif; color: #444; writing-mode: vertical-rl; transform: rotate(180deg);
    background: linear-gradient(#aaa,#aaa) center 0/7px 1px no-repeat;}
.canvas{ flex: 1; min-width: 0; background: #f8f9fa; position: relative; overflow: hidden; padding-left: 388px; padding-top: 21px;}
.outline-ico{ position: absolute; left: 25px; top: 40px; width: 24px; height: 24px; color: #5f6368;}
.page{ width: 993px; height: 1200px; background: #fff; border: 1px solid #e6e6e6; padding: 127px 119px 0; color: #000;
    font: 18.35px/21px "Liberation Sans", Arial, sans-serif; box-shadow: 0 0 3px rgba(60,64,67,.15);}
.page a{ color: #1155cc; text-decoration: underline;}
.page a.mail{ color: #4a7fe8; text-decoration: none;}
.pipe{ color: #1155cc;}
.center{ text-align: center; white-space: nowrap;}
.wide{ word-spacing: 1.2px;}
.name{ text-align: center; font: 700 33.6px/36px "Liberation Sans", sans-serif; font-variant: small-caps; position: relative; padding-right: 12px;}
.cursor{ position: absolute; left: 481px; top: -8px; width: 2px; height: 46px; background: #000;}
.sec{ text-align: center; font: 700 20px/21px "Liberation Sans", sans-serif; font-variant: small-caps;}
.gap1{ margin-top: 1px;}
.gap5{ margin-top: 5px;}
.gap8{ margin-top: 8px;}
.gap9{ margin-top: 9px;}
.gap20{ margin-top: 20px;}
.gap22{ margin-top: 22px;}
.gap29{ margin-top: 29px;}
.gap30{ margin-top: 30px;}
ul{ list-style: none;}
li{ display: flex; align-items: center; padding-left: 31px;}
li::before{ content: ""; width: 7px; height: 8px; border-radius: 50%; background: #000; margin-right: 22px;}
.scroll-thumb{ position: absolute; left: 1818px; top: 6px; width: 11px; height: 385px; border-radius: 6px; background: #dadce0;}
.explore{ position: absolute; left: 1767px; top: 699px; width: 46px; height: 46px; background: #f8f9fa; border: 1px solid #dadce0; border-radius: 4px; display: flex; align-items: center; justify-content: center; box-shadow: 0 1px 2px rgba(60,64,67,.2);}
.explore svg{ width: 26px; height: 26px;}

/* windows taskbar */
.taskbar{ height: 50px; flex: none; background: #cbdfe6; display: flex; align-items: stretch; color: #111;}
.start{ width: 20px; height: 20px; margin: 15px 21px 0 20px; fill: #000;}
.search{ width: 428px; background: #fff; display: flex; align-items: center; padding-left: 13px; gap: 10px; font-size: 18px; border: 1px solid #b9c8cc; color: #333;}
.search svg{ width: 24px; height: 24px;}
.task{ width: 62px; display: flex; align-items: center; justify-content: center;}
.task svg{ width: 30px; height: 30px;}
.run{ background: linear-gradient(#0078d4,#0078d4) center bottom/50px 3px no-repeat;}
.run-on{ background: linear-gradient(#0078d4,#0078d4) center bottom/100% 3px no-repeat, #e4eff2;}
.tray{ margin-left: auto; display: flex; align-items: center;}
.sun{ width: 23px; height: 23px; border-radius: 50%; background: linear-gradient(135deg, #ffe680, #ff9d0a); margin-right: 14px;}
.weather{ font-size: 17.5px; margin-right: 19px; white-space: nowrap;}
.tray-ico{ width: 20px; height: 20px; margin-right: 10px;}
.lang{ font-size: 15px; margin-right: 14px;}
.clock{ display: flex; flex-direction: column; align-items: center; font-size: 14.5px; line-height: 22px; width: 84px;}
.notify{ position: relative; width: 56px; margin-right: 12px; align-self: stretch; display: flex; align-items: center; justify-content: center;}
.notify svg{ width: 24px; height: 24px;}
.notify-n{ position: absolute; left: 26px; top: 24px; width: 20px; height: 20px; border-radius: 50%; background: #b8c8cc; border: 1px solid #666; font-size: 13px; line-height: 18px; text-align: center;}
```
